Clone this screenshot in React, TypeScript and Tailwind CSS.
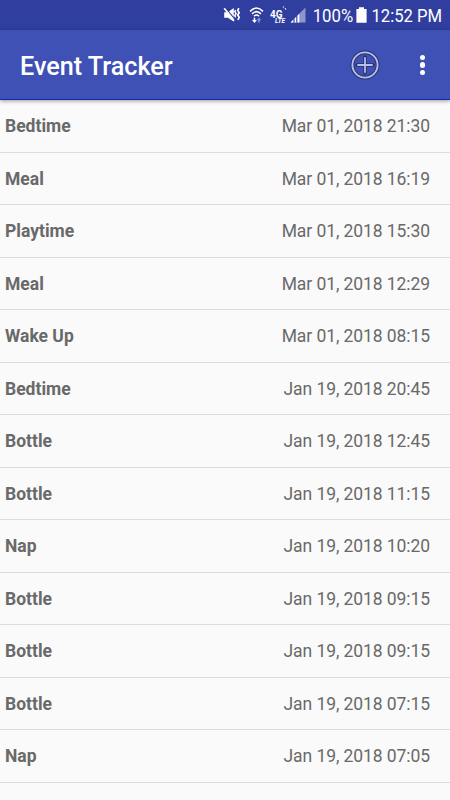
const events = [
  { name: "Bedtime", date: "Mar 01, 2018 21:30" },
  { name: "Meal", date: "Mar 01, 2018 16:19" },
  { name: "Playtime", date: "Mar 01, 2018 15:30" },
  { name: "Meal", date: "Mar 01, 2018 12:29" },
  { name: "Wake Up", date: "Mar 01, 2018 08:15" },
  { name: "Bedtime", date: "Jan 19, 2018 20:45" },
  { name: "Bottle", date: "Jan 19, 2018 12:45" },
  { name: "Bottle", date: "Jan 19, 2018 11:15" },
  { name: "Nap", date: "Jan 19, 2018 10:20" },
  { name: "Bottle", date: "Jan 19, 2018 09:15" },
  { name: "Bottle", date: "Jan 19, 2018 09:15" },
  { name: "Bottle", date: "Jan 19, 2018 07:15" },
  { name: "Nap", date: "Jan 19, 2018 07:05" },
];

function MuteIcon() {
  return (
    <svg className="w-[18px] h-[18px] shrink-0" viewBox="0 0 18 18" fill="none">
      <path d="M1.2 6.3h3.6L10.8 2v13.5L4.8 11.8H1.2z" fill="#fff" />
      <path d="M2.2 1.6L12.2 13.6" stroke="#303f9f" strokeWidth="1.2" />
      <path d="M1.2 2.2L11 14.8" stroke="#fff" strokeWidth="1.7" />
      <path d="M12.6 4l-.8 1.6 1.3 2-1.3 2 .9 1.8" stroke="#fff" strokeWidth="1.5" />
      <path d="M15.8 2.2l-1.1 2.2 1.5 2.3-1.5 2.3 1.5 2.3-1.3 2.6" stroke="#fff" strokeWidth="1.7" />
    </svg>
  );
}

function WifiIcon() {
  return (
    <svg className="w-[15px] h-[18px] shrink-0" viewBox="0 0 15 18" fill="none">
      <path d="M1 5.4Q7.5-1.2 14 5.4M3 7.9Q7.5 3.4 12 7.9M5 10.2Q7.5 7.8 10 10.2" stroke="#fff" strokeWidth="1.5" />
      <path d="M4.7 11.8v2.3H3l2.5 2.8 2.4-2.8H6.2v-2.3z" fill="#fff" />
      <path d="M9.2 16.7v-2.5H7.8l2.2-2.6 2.2 2.6h-1.5v2.5z" fill="#8d97cc" />
    </svg>
  );
}

function LteIcon() {
  return (
    <svg className="w-[18px] h-[20px] shrink-0" viewBox="0 0 18 20" fill="#fff" fontFamily="Roboto, sans-serif" fontWeight="700">
      <text x="0" y="13" fontSize="10.5" textLength="12.5" lengthAdjust="spacingAndGlyphs">4G</text>
      <text x="5" y="18.3" fontSize="6.6" fontStyle="italic" textLength="10" lengthAdjust="spacingAndGlyphs">LTE</text>
      <path d="M13 1.7l1 .6M15 3.2l.9 1.3" stroke="#fff" strokeWidth="1.1" fill="none" />
    </svg>
  );
}

function SignalIcon() {
  return (
    <svg className="w-[16px] h-[16px] shrink-0" viewBox="0 0 16 16">
      <path d="M0.5 15.5L15.5 0.5V15.5z" fill="#8c96ce" />
      <path d="M0.5 15.5l3-3v3zM4.5 11.5l1.8-1.8v5.8H4.5zM7.3 8.7l2-2v8.8h-2z" fill="#fff" />
      <path d="M3.5 12v3.5h1V11zM6.3 9v6.5h1V8z" fill="#4855a9" />
    </svg>
  );
}

function StatusBar() {
  return (
    <div className="h-[30px] bg-[#303f9f] flex items-center text-white pl-[223px]">
      <MuteIcon />
      <div className="w-[8px] shrink-0" />
      <WifiIcon />
      <div className="w-[6px] shrink-0" />
      <LteIcon />
      <div className="w-[2px] shrink-0" />
      <SignalIcon />
      <svg className="w-[144px] h-[30px] shrink-0 overflow-visible" viewBox="306 0 144 30" fill="#fff" fontFamily="Roboto, sans-serif" fontSize="19">
        <text x="312.7" y="22" textLength="40.5" lengthAdjust="spacingAndGlyphs">100%</text>
        <path d="M359 7.3h5v1.7h2.6v13.7h-10.2V9H359z" />
        <text x="371.5" y="22" textLength="70.5" lengthAdjust="spacingAndGlyphs">12:52 PM</text>
      </svg>
    </div>
  );
}

function Toolbar() {
  return (
    <header className="relative h-[70px] bg-[#3f51b5] border-b border-[#0b2cb0] shadow-[0_1px_4px_rgba(0,0,0,0.4)] flex items-center justify-between pl-5 pr-[25px]">
      <h1 className="text-white text-[25.2px] leading-[30px] font-medium mt-[4px]">Event Tracker</h1>
      <div className="flex items-center">
        <button aria-label="Add event" className="mt-px mr-[40px]">
          <svg className="w-[30px] h-[30px] block" viewBox="0 0 30 30" fill="none">
            <circle cx="15" cy="15" r="12.6" stroke="#263174" strokeWidth="3.8" />
            <path d="M15 7v16M7 15h16" stroke="#263174" strokeWidth="3.6" strokeLinecap="round" />
            <circle cx="15" cy="15" r="12.6" stroke="#b9bfe3" strokeWidth="1.9" />
            <path d="M15 7.3v15.4M7.3 15h15.4" stroke="#b9bfe3" strokeWidth="1.8" />
          </svg>
        </button>
        <button aria-label="More options" className="flex flex-col gap-[2.2px] mt-px">
          <span className="w-[5.4px] h-[5.4px] rounded-full bg-white" />
          <span className="w-[5.4px] h-[5.4px] rounded-full bg-white" />
          <span className="w-[5.4px] h-[5.4px] rounded-full bg-white" />
        </button>
      </div>
    </header>
  );
}

export default function App() {
  return (
    <div className="w-[450px] h-[800px] overflow-hidden bg-[#fafafa] font-[Roboto,sans-serif]">
      <StatusBar />
      <Toolbar />
      <ul>
        {events.map((event, index) => (
          <li
            key={index}
            className="h-[52.5px] flex items-center justify-between pt-[1.5px] pl-[5px] pr-5 border-b border-[#dcdcdc] text-[17.5px] text-[#696969]"
          >
            <span className="font-bold">{event.name}</span>
            <span className="tracking-[-0.08px]">{event.date}</span>
          </li>
        ))}
      </ul>
    </div>
  );
}
